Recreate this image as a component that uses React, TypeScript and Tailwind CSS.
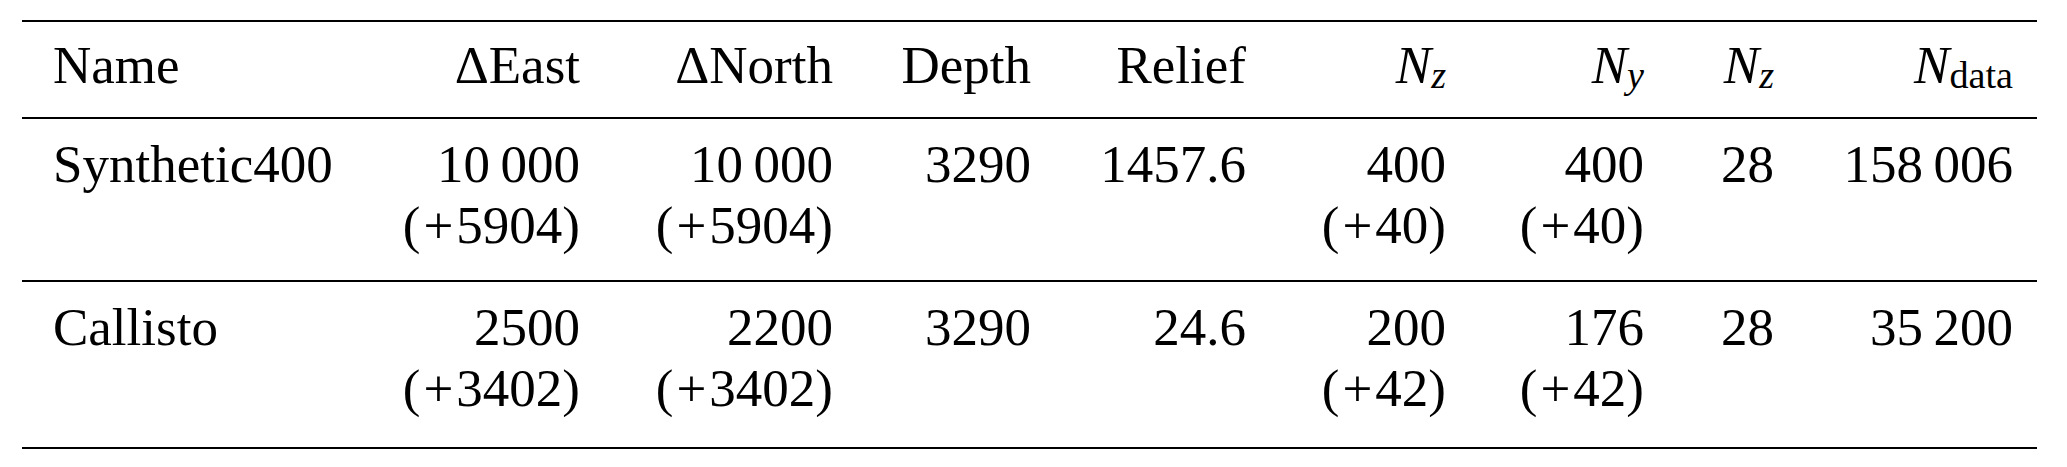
const COLS = ["w-[300px] text-left", "w-[227px] text-right", "w-[253px] text-right", "w-[198px] text-right", "w-[215px] text-right", "w-[200px] text-right", "w-[198px] text-right", "w-[130px] text-right", "w-[239px] text-right"];

type Cell = React.ReactNode;

const Sub = ({ children, italic }: { children: React.ReactNode; italic?: boolean }) => (
  <sub className={`text-[0.72em] relative top-[0.14em] align-baseline ${italic ? "italic" : ""}`}>{children}</sub>
);

// parenthesised padding value, with a math-style plus sign
const Pad = ({ v }: { v: string }) => (
  <>(<span className="inline-block w-[0.68em] text-center">+</span>{v})</>
);

const HEAD: Cell[] = [
  "Name",
  "\u0394East",
  "\u0394North",
  "Depth",
  "Relief",
  <><i>N</i><Sub italic>z</Sub></>,
  <><i>N</i><Sub italic>y</Sub></>,
  <><i>N</i><Sub italic>z</Sub></>,
  <><i>N</i><Sub>data</Sub></>,
];

const ROWS: Cell[][][] = [
  [["Synthetic400"], ["10\u2009000", <Pad v="5904" />], ["10\u2009000", <Pad v="5904" />], ["3290"], ["1457.6"], ["400", <Pad v="40" />], ["400", <Pad v="40" />], ["28"], ["158\u2009006"]],
  [["Callisto"], ["2500", <Pad v="3402" />], ["2200", <Pad v="3402" />], ["3290"], ["24.6"], ["200", <Pad v="42" />], ["176", <Pad v="42" />], ["28"], ["35\u2009200"]],
];

export default function App() {
  return (
    <div className="w-[2067px] h-[467px] bg-white pt-[20px] pl-[22px] text-black">
      <div className="w-[2015px] text-[53px] leading-[61px] font-['Liberation_Serif']">
        <div className="h-[2px] bg-black" />
        <div className="flex pl-[31px] pt-[13px] pb-[21px]">
          {HEAD.map((h, i) => (
            <div key={i} className={`shrink-0 whitespace-nowrap ${COLS[i]}`}>{h}</div>
          ))}
        </div>
        {ROWS.map((row, r) => (
          <div key={r}>
            <div className="h-[2px] bg-black" />
            <div className={`flex pl-[31px] pt-[15px] ${r === 0 ? "pb-[24px]" : "pb-[28px]"}`}>
              {row.map((cell, i) => (
                <div key={i} className={`shrink-0 whitespace-nowrap ${COLS[i]}`}>
                  {cell.map((line, j) => <div key={j}>{line}</div>)}
                </div>
              ))}
            </div>
          </div>
        ))}
        <div className="h-[2px] bg-black" />
      </div>
    </div>
  );
}
